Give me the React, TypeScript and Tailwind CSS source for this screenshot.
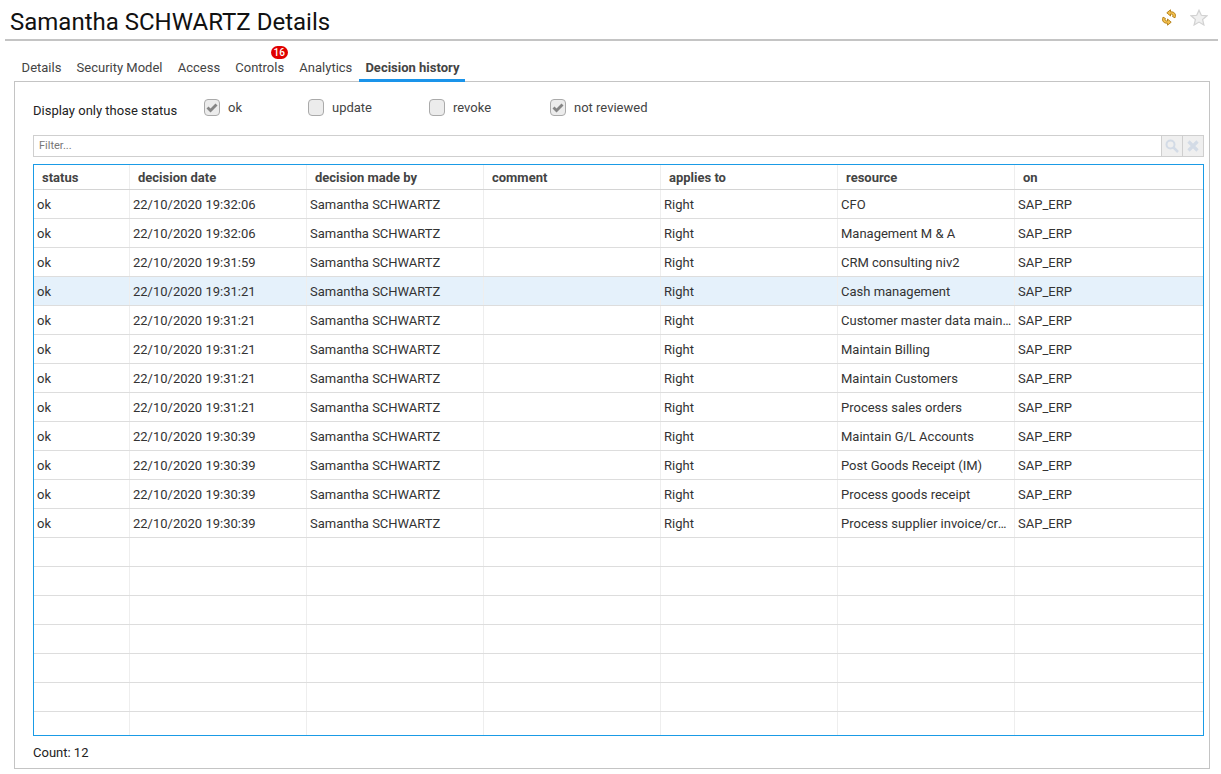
import React from "react";

const names = [
  ["22/10/2020 19:32:06", "CFO"],
  ["22/10/2020 19:32:06", "Management M & A"],
  ["22/10/2020 19:31:59", "CRM consulting niv2"],
  ["22/10/2020 19:31:21", "Cash management"],
  ["22/10/2020 19:31:21", "Customer master data maintenance"],
  ["22/10/2020 19:31:21", "Maintain Billing"],
  ["22/10/2020 19:31:21", "Maintain Customers"],
  ["22/10/2020 19:31:21", "Process sales orders"],
  ["22/10/2020 19:30:39", "Maintain G/L Accounts"],
  ["22/10/2020 19:30:39", "Post Goods Receipt (IM)"],
  ["22/10/2020 19:30:39", "Process goods receipt"],
  ["22/10/2020 19:30:39", "Process supplier invoice/credit memo"],
];
const widths = ["w-[96px]", "w-[177px]", "w-[177px]", "w-[177px]", "w-[177px]", "w-[177px]", "flex-1"];
const headers = ["status", "decision date", "decision made by", "comment", "applies to", "resource", "on"];

function Row({ cells, selected, last }: { cells: string[]; selected?: boolean; last?: boolean }) {
  return (
    <div className={`flex border-[#ddd] ${last ? "h-[24px]" : "h-[29px] border-b"} ${selected ? "bg-[#e5f1fb]" : ""}`}>
      {widths.map((w, i) => (
        <div key={i} className={`${w} shrink-0 min-w-0 pl-[3px] pr-[2px] pt-[7px] truncate leading-[16px] ${i < 6 ? "border-r border-[#eeeeee]" : ""}`}>
          {cells[i] ?? ""}
        </div>
      ))}
    </div>
  );
}

function Check({ label, checked, w }: { label: string; checked?: boolean; w: string }) {
  return (
    <div className={`flex items-start gap-[8px] ${w}`}>
      <span className="mt-px w-[16px] h-[17px] rounded-[4px] border border-[#aaa] bg-[#ececec] flex items-center justify-center">
        {checked && (
          <svg width="12" height="10" viewBox="0 0 12 10"><path d="M0.5 5.5 L2.5 3.5 L4.5 5.5 L9.5 0.5 L11.5 2.5 L4.5 9.5 Z" fill="#858585" /></svg>
        )}
      </span>
      <span className="pt-px leading-[17px] text-[#444]">{label}</span>
    </div>
  );
}

export default function App() {
  const rows = names.map(([d, r]) => ["ok", d, "Samantha SCHWARTZ", "", "Right", r, "SAP_ERP"]);
  return (
    <div className="h-[774px] w-[1221px] overflow-hidden bg-white text-[13px] text-[#333] [font-family:Roboto,sans-serif]">
      <div className="ml-[5px] mr-[3px] h-[41px] border-b-2 border-[#c4c4c4] flex items-start justify-between pl-[5px] pr-[10px]">
        <h1 className="text-[24px] leading-[28px] pt-[8px] text-[#111]">Samantha SCHWARTZ Details</h1>
        <div className="flex items-center gap-[13px] pt-[9px]">
          <svg width="16" height="17" viewBox="0 0 16 17" fill="#f3c04f" stroke="#b07a10" strokeWidth="0.9" strokeLinejoin="round">
            <path d="M9.5 0.8 L9.5 2.8 C13 2.6 15.6 4.8 14 8.8 L11.6 7.6 C12.4 5.8 11.4 5 9.5 5 L9.5 7 L5.8 3.8 Z" />
            <path transform="rotate(180 8 8.5)" d="M9.5 0.8 L9.5 2.8 C13 2.6 15.6 4.8 14 8.8 L11.6 7.6 C12.4 5.8 11.4 5 9.5 5 L9.5 7 L5.8 3.8 Z" />
          </svg>
          <svg width="18" height="17" viewBox="0 0 18 17" fill="#f0f0f0" stroke="#d2d2d2" strokeWidth="1.2">
            <path d="M9 1.2 L11.3 6.3 L16.9 6.8 L12.6 10.5 L13.9 16 L9 13.1 L4.1 16 L5.4 10.5 L1.1 6.8 L6.7 6.3 Z" />
          </svg>
        </div>
      </div>

      <div className="relative flex h-[41px] pl-[14px]">
        {["Details", "Security Model", "Access", "Controls", "Analytics"].map((t) => (
          <div key={t} className="relative px-[7.6px] pt-[19px] leading-[16px] text-[#444]">
            {t}
            {t === "Controls" && (
              <span className="absolute left-[43px] top-[5px] h-[13px] w-[17px] rounded-full bg-[#e00000] text-white text-[10px] font-medium leading-[13px] text-center">16</span>
            )}
          </div>
        ))}
        <div className="-ml-[0.5px] px-[6px] pt-[19px] leading-[16px] font-bold text-[#444] border-b-[3px] border-[#1a94ea] h-[41px] relative z-10">
          Decision history
        </div>
      </div>

      <div className="mx-[14px] -mt-px h-[688px] w-[1196px] border border-[#c4c4c4] px-[18px]">
        <div className="flex h-[53px] pt-[16px]">
          <div className="w-[171px] pt-[4px] leading-[17px] text-[#222]">Display only those status</div>
          <Check label="ok" checked w="w-[104px]" />
          <Check label="update" w="w-[121px]" />
          <Check label="revoke" w="w-[121px]" />
          <Check label="not reviewed" checked w="w-[130px]" />
        </div>

        <div className="flex h-[22px] w-[1171px] border border-[#cfcfcf]">
          <div className="flex-1 pl-[5px] text-[11px] leading-[20px] text-[#777]">Filter...</div>
          <div className="w-[21px] border-l border-[#cfcfcf] bg-[#efefef] flex items-center justify-center">
            <svg width="14" height="14" viewBox="0 0 14 14" fill="none" stroke="#d3dbe6" strokeWidth="2"><circle cx="5.5" cy="5.5" r="4" /><path d="M8.5 8.5 L13 13" strokeWidth="2.5" /></svg>
          </div>
          <div className="w-[21px] border-l border-[#cfcfcf] bg-[#efefef] flex items-center justify-center">
            <svg width="12" height="12" viewBox="0 0 12 12" fill="none" stroke="#d3dbe6" strokeWidth="3.2"><path d="M1.5 1.5 L10.5 10.5 M10.5 1.5 L1.5 10.5" /></svg>
          </div>
        </div>

        <div className="mt-[7px] h-[572px] w-[1171px] border border-[#1a9be6] overflow-hidden">
          <div className="flex h-[25px] border-b border-[#d4d4d4]">
            {headers.map((h, i) => (
              <div key={h} className={`${widths[i]} shrink-0 pl-[8px] pt-[5px] leading-[16px] font-bold text-[#444] ${i < 6 ? "border-r border-[#eeeeee]" : ""}`}>
                {h}
              </div>
            ))}
          </div>
          {rows.map((r, i) => (
            <Row key={i} cells={r} selected={i === 3} />
          ))}
          {Array.from({ length: 7 }).map((_, i) => (
            <Row key={i} cells={[]} last={i === 6} />
          ))}
        </div>

        <div className="pt-[9px] leading-[16px] text-[#222]">Count: 12</div>
      </div>
    </div>
  );
}
